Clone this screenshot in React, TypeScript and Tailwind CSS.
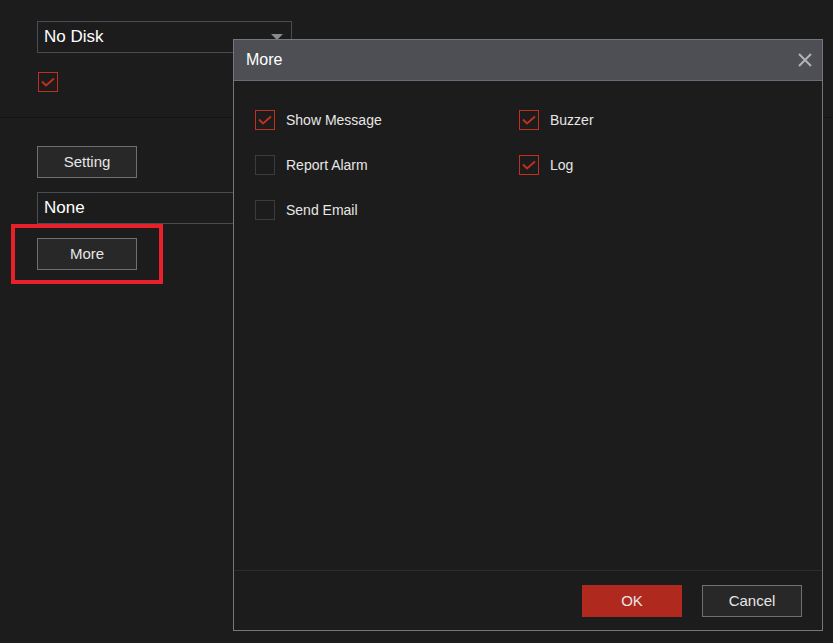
import React from "react";

function Check({ checked }: { checked: boolean }) {
  return (
    <span
      className={`flex h-5 w-5 shrink-0 items-center justify-center border ${
        checked ? "border-[#c1301f]" : "border-[#3c3c3c]"
      }`}
    >
      {checked && (
        <svg width="14" height="10" viewBox="0 0 14 10" fill="none">
          <path d="M1 4.5 L5 8.5 L13 1.5" stroke="#c1301f" strokeWidth="2" />
        </svg>
      )}
    </span>
  );
}

function Option({ label, checked }: { label: string; checked: boolean }) {
  return (
    <div className="flex h-5 items-center gap-[11px] text-[14px] text-[#e6e6e6]">
      <Check checked={checked} />
      <span>{label}</span>
    </div>
  );
}

function Button({ label, primary }: { label: string; primary?: boolean }) {
  return (
    <button
      className={`flex h-8 w-[100px] items-center justify-center text-[15px] text-[#e6e6e6] ${
        primary ? "bg-[#b0291e]" : "border border-[#707070] bg-[#282828]"
      }`}
    >
      {label}
    </button>
  );
}

export default function App() {
  return (
    <div
      className="relative h-[643px] w-[833px] overflow-hidden bg-[#1c1c1c]"
      style={{ fontFamily: '"Liberation Sans", Arial, sans-serif' }}
    >
      {/* background page */}
      <div className="pt-[21px]">
        <div className="px-[37px]">
          <div className="relative flex h-8 w-[255px] items-center border border-[#4a4b55] px-[6px] text-[17px] text-white">
            No Disk
            <span className="absolute right-[8px] top-[12px] h-0 w-0 border-x-[6px] border-t-[6px] border-x-transparent border-t-[#8a8a8a]" />
          </div>
          <div className="mt-[19px] pl-px">
            <Check checked />
          </div>
        </div>
        <div className="mt-[25px] h-px bg-[#141414]" />
        <div className="px-[37px] pt-[28px]">
          <Button label="Setting" />
          <div className="mt-[14px] flex h-8 w-[255px] items-center border border-[#4a4b55] px-[6px] text-[17px] text-white">
            None
          </div>
          <div className="-ml-[26px] w-[152px] border-4 border-[#e8202a] px-[22px] py-[10px]">
            <Button label="More" />
          </div>
        </div>
      </div>

      {/* dialog */}
      <div className="absolute left-[233px] top-[39px] flex h-[592px] w-[590px] flex-col border border-[#77767f] bg-[#1c1c1c]">
        <div className="flex h-[41px] items-center justify-between border-b border-[#6c6c78] bg-[#4e4f55] pl-3 pr-[10px] text-[16px] text-white">
          <span>More</span>
          <svg width="14" height="14" viewBox="0 0 14 14">
            <path d="M1 1 L13 13 M13 1 L1 13" stroke="#b4b4b4" strokeWidth="2" />
          </svg>
        </div>
        <div className="grid flex-1 grid-cols-[264px_1fr] content-start gap-y-[25px] px-[21px] pt-[29px]">
          <Option label="Show Message" checked />
          <Option label="Buzzer" checked />
          <Option label="Report Alarm" checked={false} />
          <Option label="Log" checked />
          <Option label="Send Email" checked={false} />
        </div>
        <div className="flex h-[60px] items-start justify-end gap-5 border-t border-[#2c2c2c] pr-5 pt-[14px]">
          <Button label="OK" primary />
          <Button label="Cancel" />
        </div>
      </div>
    </div>
  );
}
